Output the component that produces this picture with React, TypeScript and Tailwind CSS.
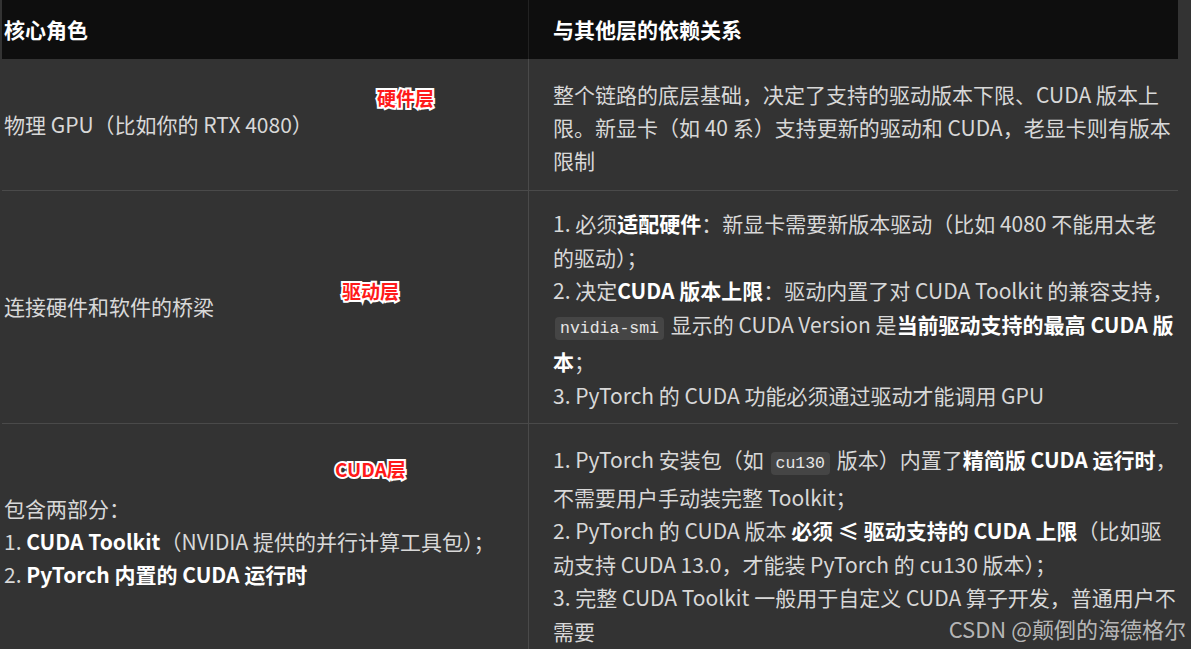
const font = "font-['Noto_Sans_CJK_SC','Noto_Sans',sans-serif]";

function Code({ children }: { children: string }) {
  return (
    <code className="mx-[2px] rounded-[4px] bg-[#454545] px-[5px] py-[2px] font-['Liberation_Mono',monospace] text-[16.5px] text-[#e6e6e6]">
      {children}
    </code>
  );
}

function B({ children }: { children: React.ReactNode }) {
  return <strong className="font-bold text-white">{children}</strong>;
}

function Tag({ text, className }: { text: string; className: string }) {
  return (
    <span
      className={`absolute font-bold text-[19px] leading-none text-[#ff1a1a] [-webkit-text-stroke:4px_white] [paint-order:stroke_fill] ${className}`}
    >
      {text}
    </span>
  );
}

const App = () => {
  return (
    <div className={`relative h-[649px] w-[1191px] overflow-hidden bg-[#333333] text-[21px] text-[#d8d8d8] ${font}`}>
      <div className="ml-[2px] w-[1176px]">
        {/* header */}
        <div className="flex h-[59px] bg-[#0e0e0e] font-bold text-white">
          <div className="flex w-[527px] items-center border-r border-[#222] pl-[2px]">核心角色</div>
          <div className="flex flex-1 items-center pl-[24px]">与其他层的依赖关系</div>
        </div>

        {/* row 1 */}
        <div className="flex h-[132px] border-b border-[#4a4a4a]">
          <div className="flex w-[527px] items-center border-r border-[#4a4a4a] pl-[2px]">
            物理 GPU（比如你的 RTX 4080）
          </div>
          <div className="flex-1 whitespace-nowrap pl-[24px] pt-[19px] leading-[33px]">
            <div>整个链路的底层基础，决定了支持的驱动版本下限、CUDA 版本上</div>
            <div>限。新显卡（如 40 系）支持更新的驱动和 CUDA，老显卡则有版本</div>
            <div>限制</div>
          </div>
        </div>

        {/* row 2 */}
        <div className="flex h-[233px] border-b border-[#4a4a4a]">
          <div className="flex w-[527px] items-center border-r border-[#4a4a4a] pl-[2px]">
            连接硬件和软件的桥梁
          </div>
          <div className="flex-1 whitespace-nowrap pl-[24px] pt-[16px] leading-[33.5px]">
            <div>
              1. 必须<B>适配硬件</B>：新显卡需要新版本驱动（比如 4080 不能用太老
            </div>
            <div>的驱动）；</div>
            <div>
              2. 决定<B>CUDA 版本上限</B>：驱动内置了对 CUDA Toolkit 的兼容支持，
            </div>
            <div>
              <Code>nvidia-smi</Code> 显示的 CUDA Version 是<B>当前驱动支持的最高 CUDA 版</B>
            </div>
            <div>
              <B>本</B>；
            </div>
            <div>3. PyTorch 的 CUDA 功能必须通过驱动才能调用 GPU</div>
          </div>
        </div>

        {/* row 3 */}
        <div className="flex h-[240px]">
          <div className="flex w-[527px] flex-col justify-center border-r border-[#4a4a4a] pb-[6px] pl-[2px] leading-[33px]">
            <div>包含两部分：</div>
            <div>
              1. <B>CUDA Toolkit</B>（NVIDIA 提供的并行计算工具包）；
            </div>
            <div>
              2. <B>PyTorch 内置的 CUDA 运行时</B>
            </div>
          </div>
          <div className="flex-1 whitespace-nowrap pl-[24px] pt-[19px] leading-[33.5px]">
            <div>
              1. PyTorch 安装包（如 <Code>cu130</Code> 版本）内置了<B>精简版 CUDA 运行时</B>，
            </div>
            <div>不需要用户手动装完整 Toolkit；</div>
            <div>
              2. PyTorch 的 CUDA 版本 <B>必须 ≤ 驱动支持的 CUDA 上限</B>（比如驱
            </div>
            <div>动支持 CUDA 13.0，才能装 PyTorch 的 cu130 版本）；</div>
            <div>3. 完整 CUDA Toolkit 一般用于自定义 CUDA 算子开发，普通用户不</div>
            <div>需要</div>
          </div>
        </div>
      </div>

      {/* annotations */}
      <Tag text="硬件层" className="left-[377px] top-[88px]" />
      <Tag text="驱动层" className="left-[342px] top-[281px]" />
      <Tag text="CUDA层" className="left-[335px] top-[459px]" />

      <span className="absolute right-[5px] top-[612px] text-[22px] text-[#c8c8c8]/90">CSDN @颠倒的海德格尔</span>
    </div>
  );
};

export default App;
